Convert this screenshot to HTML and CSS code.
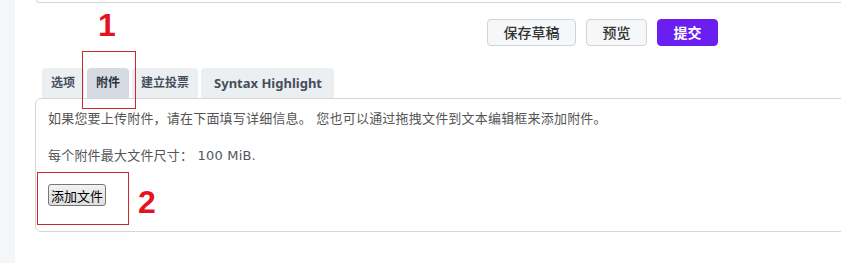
FILE: index.html
```html
<!DOCTYPE html>
<html lang="zh-CN">
<head>
<meta charset="utf-8">
<link rel="stylesheet" href="styles.css">
</head>
<body>
<div class="panel">
  <div class="prev-box"></div>
  <div class="actions">
    <button class="btn btn-wide">保存草稿</button>
    <button class="btn">预览</button>
    <button class="btn btn-primary">提交</button>
  </div>
  <div class="tabs">
    <span class="tab">选项</span>
    <span class="tab active">附件</span>
    <span class="tab">建立投票</span>
    <span class="tab latin">Syntax Highlight</span>
  </div>
  <div class="tab-body">
    <p class="info">如果您要上传附件，请在下面填写详细信息。 您也可以通过拖拽文件到文本编辑框来添加附件。</p>
    <p class="info">每个附件最大文件尺寸： 100 MiB.</p>
    <button class="native">添加文件</button>
  </div>
  <div class="mark mark-1">1</div>
  <div class="frame frame-1"></div>
  <div class="mark mark-2">2</div>
  <div class="frame frame-2"></div>
</div>
</body>
</html>
```
FILE: styles.css
```css
html, body {
  margin: 0;
  padding: 0;
  background: #f5f6f7;
  overflow: hidden;
}
body {
  width: 841px;
  height: 263px;
  font-family: "DejaVu Sans", "Noto Sans CJK SC", sans-serif;
}
.panel {
  position: relative;
  margin-left: 15px;
  height: 275px;
  background: #fff;
  border-bottom-left-radius: 14px;
  padding-left: 20px;
  box-sizing: border-box;
  overflow: hidden;
}
.prev-box {
  margin-left: 1px;
  height: 2px;
  border: 1px solid #d3d7db;
  border-top: none;
  border-radius: 0 0 0 6px;
  margin-right: -10px;
}
.actions {
  display: flex;
  justify-content: flex-end;
  gap: 10px;
  margin-top: 16px;
  padding-right: 123px;
}
.btn {
  width: 61px;
  height: 27px;
  padding: 0;
  border: 1px solid #d0d4d8;
  border-radius: 4px;
  background: #f6f7f8;
  color: #333;
  font-family: "Noto Sans CJK SC", sans-serif;
  font-size: 14px;
  font-weight: 500;
  line-height: 25px;
}
.btn-wide {
  width: 89px;
}
.btn-primary {
  background: #6a1ff0;
  border-color: #6a1ff0;
  color: #fff;
  font-weight: 700;
}
.tabs {
  display: flex;
  gap: 3px;
  margin-top: 22px;
  padding-left: 7px;
}
.tab {
  height: 30px;
  line-height: 30px;
  padding: 0 9px;
  background: #eceff2;
  border-radius: 4px 4px 0 0;
  color: #464e5c;
  font-family: "Noto Sans", "Noto Sans CJK SC", sans-serif;
  font-size: 12px;
  font-weight: 700;
}
.tab.active {
  background: #d5dbe1;
  color: #2c3340;
}
.tab.latin {
  font-size: 13px;
  padding: 0 12px 0 13px;
}
.tab-body {
  width: 900px;
  height: 134px;
  border: 1px solid #d3d7db;
  border-radius: 6px;
  box-sizing: border-box;
  padding: 10px 12px 0;
}
.info {
  margin: 0 0 18px;
  font-size: 13px;
  line-height: 19px;
  color: #555;
  letter-spacing: 0.2px;
}
.native {
  margin-top: 1px;
  height: 22px;
  padding: 0 2px;
  font-family: "Noto Sans CJK SC", sans-serif;
  font-size: 13px;
  color: #000;
  background: linear-gradient(#f2f2f2, #dedede);
  border: 1px solid #767676;
  border-radius: 3px;
}
.mark {
  position: absolute;
  color: #e3141d;
  font-family: "Liberation Sans", sans-serif;
  font-weight: 700;
  font-size: 32px;
  line-height: 32px;
}
.mark-1 { left: 83px; top: 9px; }
.mark-2 { left: 123px; top: 186px; }
.frame {
  position: absolute;
  border: 1px solid #c9262d;
}
.frame-1 { left: 67px; top: 51px; width: 52px; height: 56px; }
.frame-2 { left: 22px; top: 172px; width: 90px; height: 51px; }
```
